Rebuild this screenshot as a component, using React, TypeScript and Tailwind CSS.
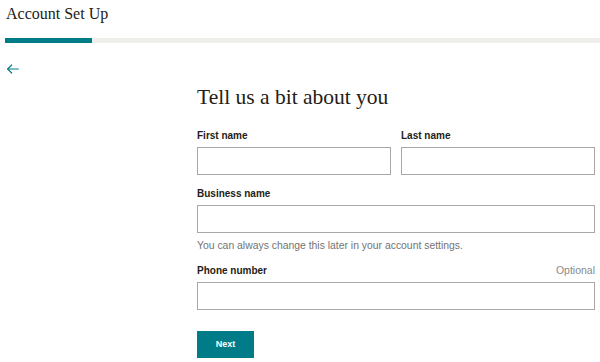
import React from "react";

const serif = { fontFamily: '"Liberation Serif", "DejaVu Serif", serif' };

function Field({ label, extra }: { label: string; extra?: string }) {
  return (
    <div className="flex flex-col">
      <div className="flex justify-between items-end h-[15px]">
        <span className="text-[10px] font-bold text-[#241c15] leading-[15px]">{label}</span>
        {extra && <span className="text-[10.5px] text-[#8a8a8a] leading-[15px]">{extra}</span>}
      </div>
      <div className="mt-[4px] h-[28px] border border-[#a8a8a8] bg-white" />
    </div>
  );
}

export default function App() {
  return (
    <div className="w-[600px] h-[362px] bg-white overflow-hidden" style={{ fontFamily: '"Liberation Sans", Arial, sans-serif' }}>
      <div className="pl-[6px] pt-[3px] h-[38px]">
        <div className="text-[16px] leading-[22px] text-[#241c15]" style={serif}>Account Set Up</div>
      </div>
      <div className="ml-[5px] h-[5px] bg-[#efeeea] flex">
        <div className="w-[87px] h-full bg-[#007c89]" />
      </div>
      <div className="flex">
        <div className="w-[197px] pl-[5px] pt-[18px]">
          <svg width="16" height="16" viewBox="0 0 24 24" fill="none" stroke="#007c89" strokeWidth="1.8" strokeLinecap="round" strokeLinejoin="round">
            <path d="M20 12H4" />
            <path d="M10 18l-6-6 6-6" />
          </svg>
        </div>
        <div className="w-[398px] flex flex-col pt-[41px]">
          <h1 className="text-[21.5px] leading-[26px] text-[#241c15]" style={serif}>Tell us a bit about you</h1>
          <div className="mt-[18px] grid grid-cols-2 gap-x-[10px]">
            <Field label="First name" />
            <Field label="Last name" />
          </div>
          <div className="mt-[11px]">
            <Field label="Business name" />
          </div>
          <div className="mt-[5px] text-[10.4px] leading-[15px] text-[#737373]">You can always change this later in your account settings.</div>
          <div className="mt-[10px]">
            <Field label="Phone number" extra="Optional" />
          </div>
          <div className="mt-[20px]">
            <button className="w-[57px] h-[27px] bg-[#007c89] text-white text-[9px] font-bold">Next</button>
          </div>
        </div>
      </div>
    </div>
  );
}
